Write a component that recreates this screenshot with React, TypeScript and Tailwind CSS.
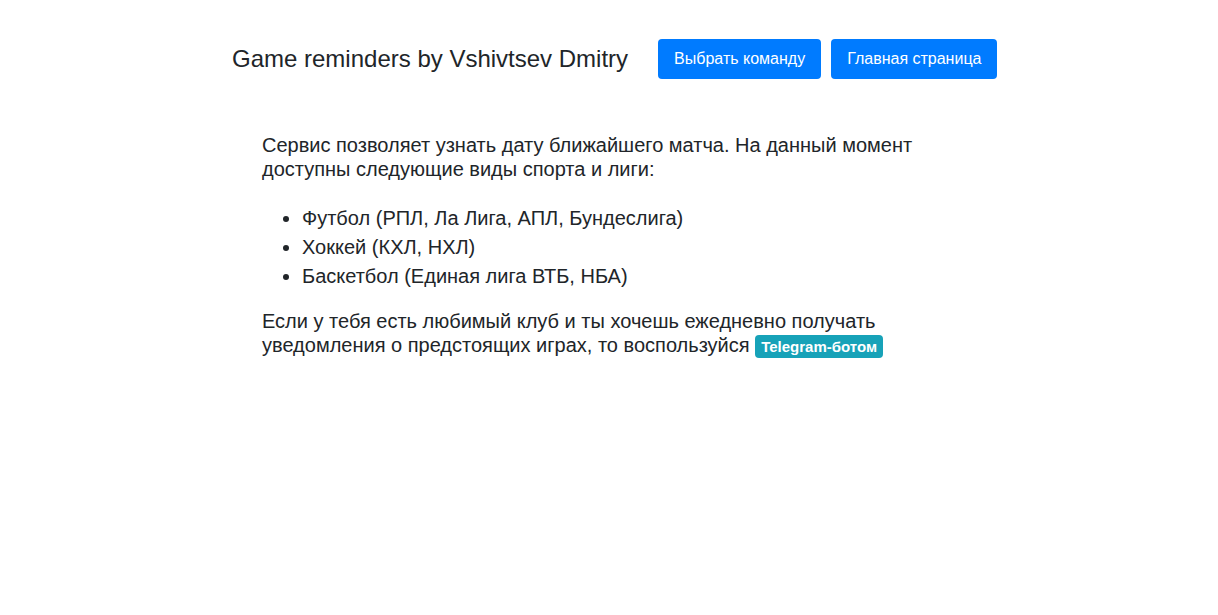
export default function App() {
  return (
    <div className="min-h-screen bg-white text-[#212529]" style={{ fontFamily: '"Liberation Sans", Arial, sans-serif' }}>
      {/* Header */}
      <header className="flex items-center pl-[232px] pt-[39px]">
        <h1 className="text-[24px] leading-[1.2] font-normal">Game reminders by Vshivtsev Dmitry</h1>
        <div className="ml-[30px] flex gap-[10px]">
          <button className="h-[40px] rounded-[4px] bg-[#007bff] px-4 text-[16px] text-white">Выбрать команду</button>
          <button className="h-[40px] rounded-[4px] bg-[#007bff] px-4 text-[16px] text-white">Главная страница</button>
        </div>
      </header>

      {/* Content */}
      <main className="w-[942px] pl-[262px] pt-[54px]">
        <p className="text-[20px] leading-[24px]">
          Сервис позволяет узнать дату ближайшего матча. На данный момент доступны следующие виды спорта и лиги:
        </p>
        <ul className="mt-[23px] list-disc pl-[40px] text-[20px] leading-[29px]">
          <li>Футбол (РПЛ, Ла Лига, АПЛ, Бундеслига)</li>
          <li>Хоккей (КХЛ, НХЛ)</li>
          <li>Баскетбол (Единая лига ВТБ, НБА)</li>
        </ul>
        <p className="mt-[18px] text-[20px] leading-[24px]">
          Если у тебя есть любимый клуб и ты хочешь ежедневно получать уведомления о предстоящих играх, то воспользуйся{" "}
          <span className="inline-block rounded-[4px] bg-[#17a2b8] px-[6px] py-[3.75px] align-baseline text-[15px] font-bold leading-none text-white">
            Telegram-ботом
          </span>
        </p>
      </main>
    </div>
  );
}
